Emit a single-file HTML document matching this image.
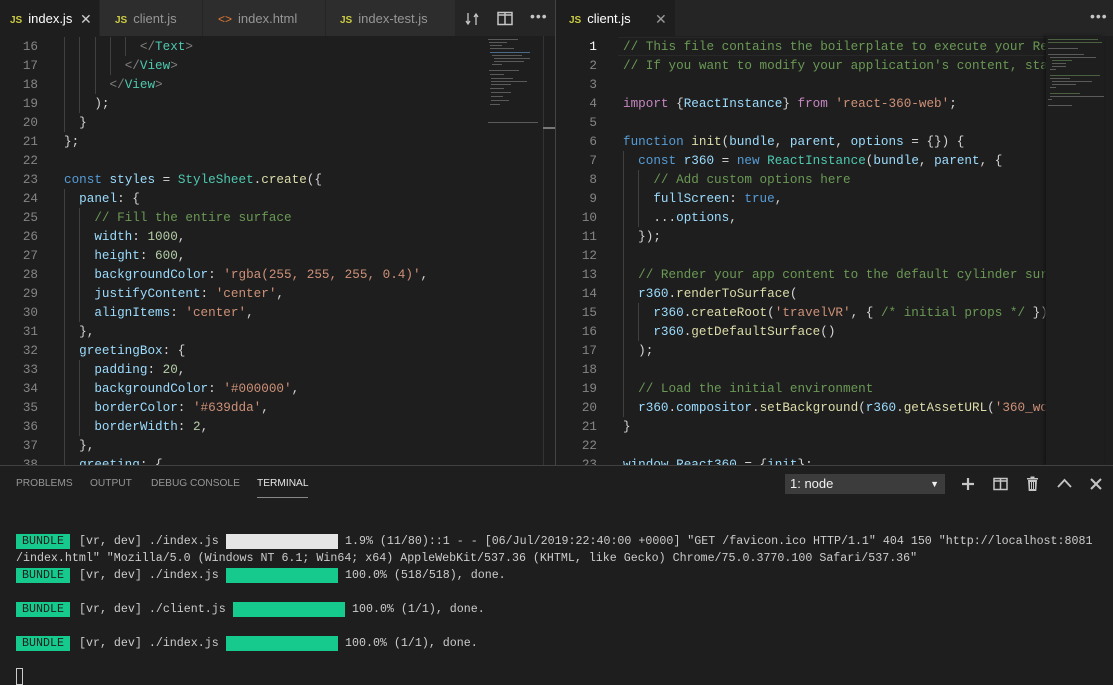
<!DOCTYPE html>
<html><head><meta charset="utf-8"><style>
*{margin:0;padding:0;box-sizing:border-box}
body{width:1113px;height:685px;background:#1e1e1e;overflow:hidden;position:relative;font-family:"Liberation Sans",sans-serif}
.tabbar{position:absolute;top:0;height:36px;background:#252526}
.tab{position:absolute;top:0;height:36px;font-size:13px;color:#969696;line-height:38px;background:#2d2d2d;border-right:1px solid #252526}
.tab.act{background:#1e1e1e;color:#fff}
.js{color:#cbcb41;font-weight:bold;font-size:10px;margin-right:6px}
.x{position:absolute;font-size:14px;color:#ccc}
.ed{position:absolute;top:37px;font-family:"Liberation Mono",monospace;font-size:12.65px;white-space:pre;color:#d4d4d4}
.ln{position:absolute;width:38px;text-align:right;color:#858585;height:19px;line-height:19px}
.cl{position:absolute;height:19px;line-height:19px}
.c{color:#6a9955}.k{color:#569cd6}.i{color:#c586c0}.s{color:#ce9178}.n{color:#b5cea8}.p{color:#9cdcfe}.f{color:#dcdcaa}.t{color:#4ec9b0}.g{color:#808080}
.guide{position:absolute;width:1px;background:#404040}
.term{position:absolute;font-family:"Liberation Mono",monospace;font-size:11.65px;color:#ccc;white-space:pre;line-height:17px}
.bd{position:absolute;color:#1e1e1e;height:15px;width:54px;font-family:"Liberation Mono",monospace;font-size:11.65px;line-height:15px;text-align:center;background:#16c98d}
.bar{position:absolute;height:15px;width:112px}
.mm{position:absolute;height:1px;background:#5a5a5a}
.pt{position:absolute;top:478px;font-size:10.2px;color:#969696}
</style></head><body>

<div class="tabbar" style="left:0;width:555px">
 <div class="tab act" style="left:0;width:100px;padding-left:10px"><span class="js">JS</span>index.js<span class="x" style="left:80px;top:0">✕</span></div>
 <div class="tab" style="left:100px;width:103px;padding-left:15px"><span class="js">JS</span>client.js</div>
 <div class="tab" style="left:203px;width:123px;padding-left:15px"><span style="color:#e37933;margin-right:6px;font-size:12px">&lt;&gt;</span>index.html</div>
 <div class="tab" style="left:326px;width:130px;padding-left:14px"><span class="js">JS</span>index-test.js</div>
 <svg style="position:absolute;left:464px;top:11px" width="16" height="16" viewBox="0 0 16 16" fill="none" stroke="#c5c5c5" stroke-width="1.3"><path d="M4 2v10M2 10l2 3 2-3M12 14V4M10 6l2-3 2 3"/></svg>
 <svg style="position:absolute;left:497px;top:11px" width="16" height="15" viewBox="0 0 16 15" fill="none" stroke="#c5c5c5" stroke-width="1.5"><rect x="1" y="1.5" width="14" height="12"/><path d="M8 1.5v12M1 4h14"/></svg>
 <div style="position:absolute;left:530px;top:8px;color:#c5c5c5;font-size:14px;letter-spacing:1px">•••</div>
</div>
<div style="position:absolute;left:555px;top:0;width:1px;height:465px;background:#444"></div>
<div class="tabbar" style="left:556px;width:557px">
 <div class="tab act" style="left:0;width:120px;padding-left:13px"><span class="js">JS</span>client.js<span class="x" style="left:99px;top:0;color:#999">✕</span></div>
 <div style="position:absolute;left:534px;top:8px;color:#c5c5c5;font-size:14px;letter-spacing:1px">•••</div>
</div>

<div class="ed" style="left:0;width:555px;height:428px;overflow:hidden">
 <div class="guide" style="left:64px;top:0;height:95px"></div>
 <div class="guide" style="left:79px;top:0;height:76px"></div>
 <div class="guide" style="left:95px;top:0;height:57px"></div>
 <div class="guide" style="left:110px;top:0;height:38px"></div>
 <div class="guide" style="left:125px;top:0;height:19px"></div>
 <div class="guide" style="left:64px;top:152px;height:276px"></div>
 <div class="guide" style="left:79px;top:171px;height:114px"></div>
 <div class="guide" style="left:79px;top:323px;height:76px"></div>
 <div class="ln" style="top:0">16</div><div class="cl" style="top:0;left:64px">          <span class="g">&lt;/</span><span class="t">Text</span><span class="g">&gt;</span></div>
 <div class="ln" style="top:19px">17</div><div class="cl" style="top:19px;left:64px">        <span class="g">&lt;/</span><span class="t">View</span><span class="g">&gt;</span></div>
 <div class="ln" style="top:38px">18</div><div class="cl" style="top:38px;left:64px">      <span class="g">&lt;/</span><span class="t">View</span><span class="g">&gt;</span></div>
 <div class="ln" style="top:57px">19</div><div class="cl" style="top:57px;left:64px">    );</div>
 <div class="ln" style="top:76px">20</div><div class="cl" style="top:76px;left:64px">  }</div>
 <div class="ln" style="top:95px">21</div><div class="cl" style="top:95px;left:64px">};</div>
 <div class="ln" style="top:114px">22</div>
 <div class="ln" style="top:133px">23</div><div class="cl" style="top:133px;left:64px"><span class="k">const</span> <span class="p">styles</span> = <span class="t">StyleSheet</span>.<span class="f">create</span>({</div>
 <div class="ln" style="top:152px">24</div><div class="cl" style="top:152px;left:64px">  <span class="p">panel</span>: {</div>
 <div class="ln" style="top:171px">25</div><div class="cl" style="top:171px;left:64px">    <span class="c">// Fill the entire surface</span></div>
 <div class="ln" style="top:190px">26</div><div class="cl" style="top:190px;left:64px">    <span class="p">width</span>: <span class="n">1000</span>,</div>
 <div class="ln" style="top:209px">27</div><div class="cl" style="top:209px;left:64px">    <span class="p">height</span>: <span class="n">600</span>,</div>
 <div class="ln" style="top:228px">28</div><div class="cl" style="top:228px;left:64px">    <span class="p">backgroundColor</span>: <span class="s">'rgba(255, 255, 255, 0.4)'</span>,</div>
 <div class="ln" style="top:247px">29</div><div class="cl" style="top:247px;left:64px">    <span class="p">justifyContent</span>: <span class="s">'center'</span>,</div>
 <div class="ln" style="top:266px">30</div><div class="cl" style="top:266px;left:64px">    <span class="p">alignItems</span>: <span class="s">'center'</span>,</div>
 <div class="ln" style="top:285px">31</div><div class="cl" style="top:285px;left:64px">  },</div>
 <div class="ln" style="top:304px">32</div><div class="cl" style="top:304px;left:64px">  <span class="p">greetingBox</span>: {</div>
 <div class="ln" style="top:323px">33</div><div class="cl" style="top:323px;left:64px">    <span class="p">padding</span>: <span class="n">20</span>,</div>
 <div class="ln" style="top:342px">34</div><div class="cl" style="top:342px;left:64px">    <span class="p">backgroundColor</span>: <span class="s">'#000000'</span>,</div>
 <div class="ln" style="top:361px">35</div><div class="cl" style="top:361px;left:64px">    <span class="p">borderColor</span>: <span class="s">'#639dda'</span>,</div>
 <div class="ln" style="top:380px">36</div><div class="cl" style="top:380px;left:64px">    <span class="p">borderWidth</span>: <span class="n">2</span>,</div>
 <div class="ln" style="top:399px">37</div><div class="cl" style="top:399px;left:64px">  },</div>
 <div class="ln" style="top:418px">38</div><div class="cl" style="top:418px;left:64px">  <span class="p">greeting</span>: {</div>
</div>
<div style="position:absolute;left:487px;top:36px;width:56px;height:429px;background:#1e1e1e">
 <div class="mm" style="left:1px;top:3px;width:30px"></div><div class="mm" style="left:2px;top:6px;width:18px"></div><div class="mm" style="left:3px;top:9px;width:12px"></div><div class="mm" style="left:3px;top:12px;width:24px"></div><div class="mm" style="left:3px;top:16px;width:40px;background:#4a6a8a"></div><div class="mm" style="left:5px;top:19px;width:30px"></div><div class="mm" style="left:7px;top:22px;width:36px"></div><div class="mm" style="left:7px;top:25px;width:30px"></div><div class="mm" style="left:5px;top:28px;width:10px"></div><div class="mm" style="left:2px;top:34px;width:30px"></div><div class="mm" style="left:3px;top:38px;width:14px"></div><div class="mm" style="left:4px;top:42px;width:22px"></div><div class="mm" style="left:4px;top:45px;width:36px"></div><div class="mm" style="left:4px;top:48px;width:20px"></div><div class="mm" style="left:3px;top:52px;width:14px"></div><div class="mm" style="left:4px;top:56px;width:20px"></div><div class="mm" style="left:4px;top:60px;width:12px"></div><div class="mm" style="left:4px;top:64px;width:18px"></div><div class="mm" style="left:3px;top:68px;width:10px"></div><div class="mm" style="left:1px;top:86px;width:50px"></div>
</div>
<div style="position:absolute;left:543px;top:36px;width:12px;height:429px;border-left:1px solid #333"></div>
<div style="position:absolute;left:543px;top:127px;width:12px;height:2px;background:#777"></div>

<div class="ed" style="left:556px;width:490px;height:428px;overflow:hidden">
 <div style="position:absolute;left:62px;top:0;width:430px;height:19px;border-top:1px solid #282828;border-bottom:1px solid #282828"></div>
 <div class="guide" style="left:67px;top:114px;height:266px"></div>
 <div class="guide" style="left:82px;top:133px;height:57px"></div>
 <div class="guide" style="left:82px;top:266px;height:38px"></div>
 <div class="ln" style="top:0;left:3px;color:#fff">1</div>
 <div class="cl" style="top:0;left:67px"><span class="c">// This file contains the boilerplate to execute your React app.</span></div>
 <div class="ln" style="top:19px;left:3px">2</div><div class="cl" style="top:19px;left:67px"><span class="c">// If you want to modify your application's content, start in "index.js"</span></div>
 <div class="ln" style="top:38px;left:3px">3</div>
 <div class="ln" style="top:57px;left:3px">4</div><div class="cl" style="top:57px;left:67px"><span class="i">import</span> {<span class="p">ReactInstance</span>} <span class="i">from</span> <span class="s">'react-360-web'</span>;</div>
 <div class="ln" style="top:76px;left:3px">5</div>
 <div class="ln" style="top:95px;left:3px">6</div><div class="cl" style="top:95px;left:67px"><span class="k">function</span> <span class="f">init</span>(<span class="p">bundle</span>, <span class="p">parent</span>, <span class="p">options</span> = {}) {</div>
 <div class="ln" style="top:114px;left:3px">7</div><div class="cl" style="top:114px;left:67px">  <span class="k">const</span> <span class="p">r360</span> = <span class="k">new</span> <span class="t">ReactInstance</span>(<span class="p">bundle</span>, <span class="p">parent</span>, {</div>
 <div class="ln" style="top:133px;left:3px">8</div><div class="cl" style="top:133px;left:67px">    <span class="c">// Add custom options here</span></div>
 <div class="ln" style="top:152px;left:3px">9</div><div class="cl" style="top:152px;left:67px">    <span class="p">fullScreen</span>: <span class="k">true</span>,</div>
 <div class="ln" style="top:171px;left:3px">10</div><div class="cl" style="top:171px;left:67px">    ...<span class="p">options</span>,</div>
 <div class="ln" style="top:190px;left:3px">11</div><div class="cl" style="top:190px;left:67px">  });</div>
 <div class="ln" style="top:209px;left:3px">12</div>
 <div class="ln" style="top:228px;left:3px">13</div><div class="cl" style="top:228px;left:67px">  <span class="c">// Render your app content to the default cylinder surface</span></div>
 <div class="ln" style="top:247px;left:3px">14</div><div class="cl" style="top:247px;left:67px">  <span class="p">r360</span>.<span class="f">renderToSurface</span>(</div>
 <div class="ln" style="top:266px;left:3px">15</div><div class="cl" style="top:266px;left:67px">    <span class="p">r360</span>.<span class="f">createRoot</span>(<span class="s">'travelVR'</span>, { <span class="c">/* initial props */</span> }),</div>
 <div class="ln" style="top:285px;left:3px">16</div><div class="cl" style="top:285px;left:67px">    <span class="p">r360</span>.<span class="f">getDefaultSurface</span>()</div>
 <div class="ln" style="top:304px;left:3px">17</div><div class="cl" style="top:304px;left:67px">  );</div>
 <div class="ln" style="top:323px;left:3px">18</div>
 <div class="ln" style="top:342px;left:3px">19</div><div class="cl" style="top:342px;left:67px">  <span class="c">// Load the initial environment</span></div>
 <div class="ln" style="top:361px;left:3px">20</div><div class="cl" style="top:361px;left:67px">  <span class="p">r360</span>.<span class="p">compositor</span>.<span class="f">setBackground</span>(<span class="p">r360</span>.<span class="f">getAssetURL</span>(<span class="s">'360_world.jpg'</span>));</div>
 <div class="ln" style="top:380px;left:3px">21</div><div class="cl" style="top:380px;left:67px">}</div>
 <div class="ln" style="top:399px;left:3px">22</div>
 <div class="ln" style="top:418px;left:3px">23</div><div class="cl" style="top:418px;left:67px"><span class="p">window</span>.<span class="p">React360</span> = {<span class="p">init</span>};</div>
</div>
<div style="position:absolute;left:1046px;top:36px;width:58px;height:429px;background:#1e1e1e;box-shadow:-2px 0 3px #141414">
 <div class="mm" style="left:2px;top:3px;width:50px;background:#4a6040"></div><div class="mm" style="left:2px;top:6px;width:54px;background:#4a6040"></div><div class="mm" style="left:2px;top:12px;width:30px"></div><div class="mm" style="left:2px;top:18px;width:36px"></div><div class="mm" style="left:4px;top:21px;width:46px"></div><div class="mm" style="left:6px;top:24px;width:20px;background:#4a6040"></div><div class="mm" style="left:6px;top:27px;width:14px"></div><div class="mm" style="left:6px;top:30px;width:14px"></div><div class="mm" style="left:4px;top:33px;width:6px"></div><div class="mm" style="left:4px;top:39px;width:50px;background:#4a6040"></div><div class="mm" style="left:4px;top:42px;width:20px"></div><div class="mm" style="left:6px;top:45px;width:40px"></div><div class="mm" style="left:6px;top:48px;width:24px"></div><div class="mm" style="left:4px;top:51px;width:6px"></div><div class="mm" style="left:4px;top:57px;width:30px;background:#4a6040"></div><div class="mm" style="left:4px;top:60px;width:54px"></div><div class="mm" style="left:2px;top:63px;width:4px"></div><div class="mm" style="left:2px;top:69px;width:24px"></div>
</div>

<div style="position:absolute;left:0;top:465px;width:1113px;height:220px;background:#1e1e1e;border-top:1px solid #414141"></div>
<div class="pt" style="left:16px">PROBLEMS</div>
<div class="pt" style="left:90px">OUTPUT</div>
<div class="pt" style="left:151px">DEBUG CONSOLE</div>
<div class="pt" style="left:257px;color:#e7e7e7">TERMINAL</div>
<div style="position:absolute;top:497px;left:257px;width:51px;height:1px;background:#888"></div>
<div style="position:absolute;top:474px;left:785px;width:160px;height:20px;background:#3c3c3c;color:#f0f0f0;font-size:13px;line-height:20px;padding-left:5px">1: node<span style="position:absolute;right:6px;font-size:9px;top:0">▼</span></div>
<svg style="position:absolute;left:961px;top:477px" width="14" height="14" viewBox="0 0 14 14"><path d="M7 1v12M1 7h12" stroke="#c5c5c5" stroke-width="2.2"/></svg>
<svg style="position:absolute;left:993px;top:477px" width="15" height="14" viewBox="0 0 15 14" fill="none" stroke="#c5c5c5" stroke-width="1.5"><rect x="1" y="1.5" width="13" height="11"/><path d="M7.5 1.5v11M1 4h13"/></svg>
<svg style="position:absolute;left:1026px;top:476px" width="13" height="16" viewBox="0 0 13 16" fill="#c5c5c5"><rect x="1" y="2" width="11" height="1.5"/><rect x="4.5" y="0.5" width="4" height="2"/><path d="M2 4h9l-0.7 11H2.7z M4 6v7h1V6z M6 6v7h1V6z M8 6v7h1V6z" fill-rule="evenodd"/></svg>
<svg style="position:absolute;left:1057px;top:478px" width="15" height="10" viewBox="0 0 15 10"><path d="M1 9l6.5-7 6.5 7" fill="none" stroke="#c5c5c5" stroke-width="1.8"/></svg>
<svg style="position:absolute;left:1090px;top:478px" width="12" height="12" viewBox="0 0 12 12"><path d="M1 1l10 10M11 1L1 11" stroke="#c5c5c5" stroke-width="2"/></svg>

<div class="bd" style="left:16px;top:534px">BUNDLE</div>
<div class="term" style="left:79px;top:533px">[vr, dev] ./index.js</div>
<div class="bar" style="left:226px;top:534px;background:#e5e5e5"></div>
<div class="term" style="left:345px;top:533px">1.9% (11/80)::1 - - [06/Jul/2019:22:40:00 +0000] "GET /favicon.ico HTTP/1.1" 404 150 "http://localhost:8081</div>
<div class="term" style="left:16px;top:550px">/index.html" "Mozilla/5.0 (Windows NT 6.1; Win64; x64) AppleWebKit/537.36 (KHTML, like Gecko) Chrome/75.0.3770.100 Safari/537.36"</div>
<div class="bd" style="left:16px;top:568px">BUNDLE</div>
<div class="term" style="left:79px;top:567px">[vr, dev] ./index.js</div>
<div class="bar" style="left:226px;top:568px;background:#16c98d"></div>
<div class="term" style="left:345px;top:567px">100.0% (518/518), done.</div>
<div class="bd" style="left:16px;top:602px">BUNDLE</div>
<div class="term" style="left:79px;top:601px">[vr, dev] ./client.js</div>
<div class="bar" style="left:233px;top:602px;background:#16c98d"></div>
<div class="term" style="left:352px;top:601px">100.0% (1/1), done.</div>
<div class="bd" style="left:16px;top:636px">BUNDLE</div>
<div class="term" style="left:79px;top:635px">[vr, dev] ./index.js</div>
<div class="bar" style="left:226px;top:636px;background:#16c98d"></div>
<div class="term" style="left:345px;top:635px">100.0% (1/1), done.</div>
<div style="position:absolute;left:16px;top:668px;width:7px;height:17px;border:1px solid #ccc"></div>
</body></html>
